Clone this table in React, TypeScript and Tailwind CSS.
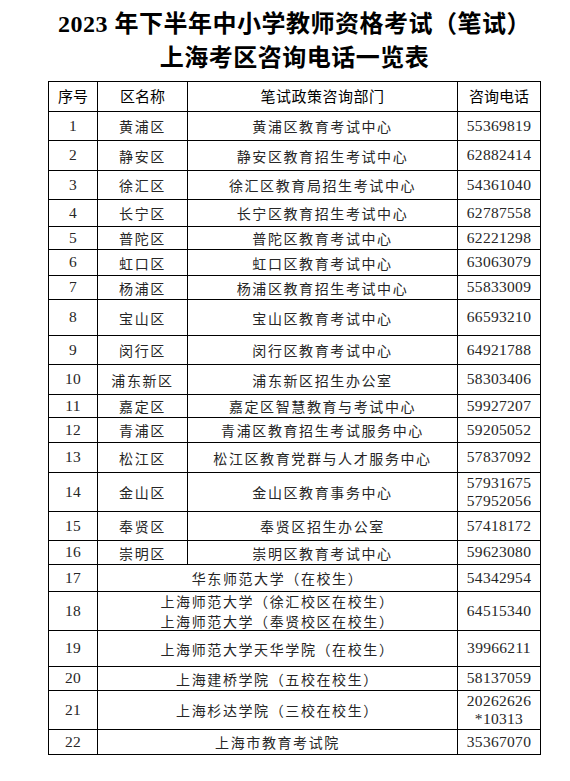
type Row = {
  no: string
  district?: string
  dept: string[]
  phone: string[]
}

const rows: Row[] = [
  { no: '1', district: '黄浦区', dept: ['黄浦区教育考试中心'], phone: ['55369819'] },
  { no: '2', district: '静安区', dept: ['静安区教育招生考试中心'], phone: ['62882414'] },
  { no: '3', district: '徐汇区', dept: ['徐汇区教育局招生考试中心'], phone: ['54361040'] },
  { no: '4', district: '长宁区', dept: ['长宁区教育招生考试中心'], phone: ['62787558'] },
  { no: '5', district: '普陀区', dept: ['普陀区教育考试中心'], phone: ['62221298'] },
  { no: '6', district: '虹口区', dept: ['虹口区教育考试中心'], phone: ['63063079'] },
  { no: '7', district: '杨浦区', dept: ['杨浦区教育招生考试中心'], phone: ['55833009'] },
  { no: '8', district: '宝山区', dept: ['宝山区教育考试中心'], phone: ['66593210'] },
  { no: '9', district: '闵行区', dept: ['闵行区教育考试中心'], phone: ['64921788'] },
  { no: '10', district: '浦东新区', dept: ['浦东新区招生办公室'], phone: ['58303406'] },
  { no: '11', district: '嘉定区', dept: ['嘉定区智慧教育与考试中心'], phone: ['59927207'] },
  { no: '12', district: '青浦区', dept: ['青浦区教育招生考试服务中心'], phone: ['59205052'] },
  { no: '13', district: '松江区', dept: ['松江区教育党群与人才服务中心'], phone: ['57837092'] },
  { no: '14', district: '金山区', dept: ['金山区教育事务中心'], phone: ['57931675', '57952056'] },
  { no: '15', district: '奉贤区', dept: ['奉贤区招生办公室'], phone: ['57418172'] },
  { no: '16', district: '崇明区', dept: ['崇明区教育考试中心'], phone: ['59623080'] },
  { no: '17', dept: ['华东师范大学（在校生）'], phone: ['54342954'] },
  {
    no: '18',
    dept: ['上海师范大学（徐汇校区在校生）', '上海师范大学（奉贤校区在校生）'],
    phone: ['64515340'],
  },
  { no: '19', dept: ['上海师范大学天华学院（在校生）'], phone: ['39966211'] },
  { no: '20', dept: ['上海建桥学院（五校在校生）'], phone: ['58137059'] },
  { no: '21', dept: ['上海杉达学院（三校在校生）'], phone: ['20262626', '*10313'] },
  { no: '22', dept: ['上海市教育考试院'], phone: ['35367070'] },
]

const cell = 'border-l border-t border-black flex flex-col items-center justify-center'
const num = "font-['Liberation_Serif',serif] text-[15.5px] tracking-[0.3px] leading-[18.5px]"
const cjk = "font-['Noto_Sans_CJK_SC',sans-serif] text-[14px] tracking-[1.6px] leading-[20px]"
const head = "font-['Noto_Sans_CJK_SC',sans-serif] text-[15px] text-black"

export default function App() {
  return (
    <div className="w-[570px] h-[781px] bg-white text-[#262626]">
      <div className="ml-[48px] w-[493px] pt-[7px] text-center text-black font-bold text-[24px] leading-[34px] tracking-[0.5px] font-['Liberation_Serif','Noto_Sans_CJK_SC',serif]">
        <div>2023 年下半年中小学教师资格考试（笔试）</div>
        <div>上海考区咨询电话一览表</div>
      </div>

      <div className="mt-[6px] ml-[48px] w-[493px] grid grid-cols-[49px_90px_270px_83px] grid-rows-[30px_29px_30px_29px_27px_23px_26px_24px_36px_29px_30px_23px_25px_30px_39px_29px_24px_27px_39px_36px_24px_39px_25px] border-r border-b border-black">
        <div className={`${cell} ${head}`}>序号</div>
        <div className={`${cell} ${head}`}>区名称</div>
        <div className={`${cell} ${head} tracking-[0.5px]`}>笔试政策咨询部门</div>
        <div className={`${cell} ${head}`}>咨询电话</div>

        {rows.map((r) => (
          <div key={r.no} className="contents">
            <div className={`${cell} ${num}`}>{r.no}</div>
            {r.district ? (
              <>
                <div className={`${cell} ${cjk}`}>{r.district}</div>
                <div className={`${cell} ${cjk}`}>
                  {r.dept.map((d) => (
                    <span key={d}>{d}</span>
                  ))}
                </div>
              </>
            ) : (
              <div className={`${cell} col-span-2 ${cjk}`}>
                {r.dept.map((d) => (
                  <span key={d}>{d}</span>
                ))}
              </div>
            )}
            <div className={`${cell} ${num}`}>
              {r.phone.map((p) => (
                <span key={p}>{p}</span>
              ))}
            </div>
          </div>
        ))}
      </div>
    </div>
  )
}
